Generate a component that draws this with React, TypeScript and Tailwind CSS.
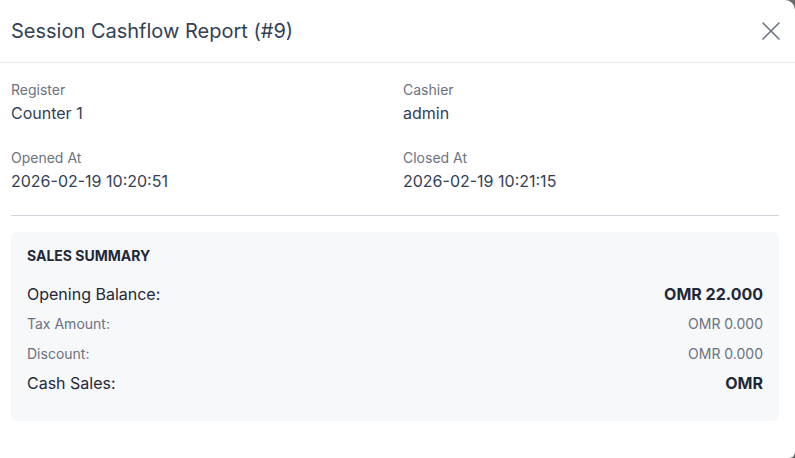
import React from 'react';
import { X } from 'lucide-react';

const info = [
  { label: 'Register', value: 'Counter 1' },
  { label: 'Cashier', value: 'admin' },
  { label: 'Opened At', value: '2026-02-19 10:20:51' },
  { label: 'Closed At', value: '2026-02-19 10:21:15' },
];

const rows = [
  { label: 'Opening Balance:', value: 'OMR 22.000', strong: true },
  { label: 'Tax Amount:', value: 'OMR 0.000', strong: false },
  { label: 'Discount:', value: 'OMR 0.000', strong: false },
  { label: 'Cash Sales:', value: 'OMR', strong: true },
];

export default function App() {
  return (
    <div className="w-[795px] h-[458px] bg-[#6b6b6b] overflow-hidden" style={{ fontFamily: 'Inter, "Noto Sans", sans-serif' }}>
      <div className="h-full bg-white rounded-tr-[10px] rounded-br-[6px]">
        <div className="h-[63px] flex items-center justify-between pl-[11px] pr-[8px] border-b border-[#e5e7eb]">
          <h2 className="text-[20px] text-[#334155]">Session Cashflow Report (#9)</h2>
          <button className="text-[#6b7280]">
            <X className="w-[32px] h-[32px]" strokeWidth={1.2} />
          </button>
        </div>

        <div className="px-[11px] pr-[16px] pt-[17px]">
          <div className="grid grid-cols-2 gap-x-4 gap-y-[23px]">
            {info.map(item => (
              <div key={item.label}>
                <div className="text-[14px] leading-[20px] text-[#6b7280]">{item.label}</div>
                <div className="text-[16px] leading-[24px] mt-[1px] text-[#334155]">{item.value}</div>
              </div>
            ))}
          </div>

          <div className="mt-[22px] border-t border-[#d1d5db]" />

          <div className="mt-[16px] h-[189px] bg-[#f7f8fa] rounded-[6px] px-4 pt-[15px]">
            <div className="text-[14px] leading-[18px] font-bold text-[#1f2937]">SALES SUMMARY</div>
            <div className="mt-[14px] flex flex-col">
              {rows.map(r => (
                <div key={r.label} className="flex items-center justify-between h-[29.7px]">
                  <span className={r.strong ? 'text-[16px] text-[#1f2937]' : 'text-[14px] text-[#6b7280]'}>{r.label}</span>
                  <span className={r.strong ? 'text-[16px] font-bold text-[#1f2937]' : 'text-[14px] text-[#6b7280]'}>{r.value}</span>
                </div>
              ))}
            </div>
          </div>
        </div>
      </div>
    </div>
  );
}
